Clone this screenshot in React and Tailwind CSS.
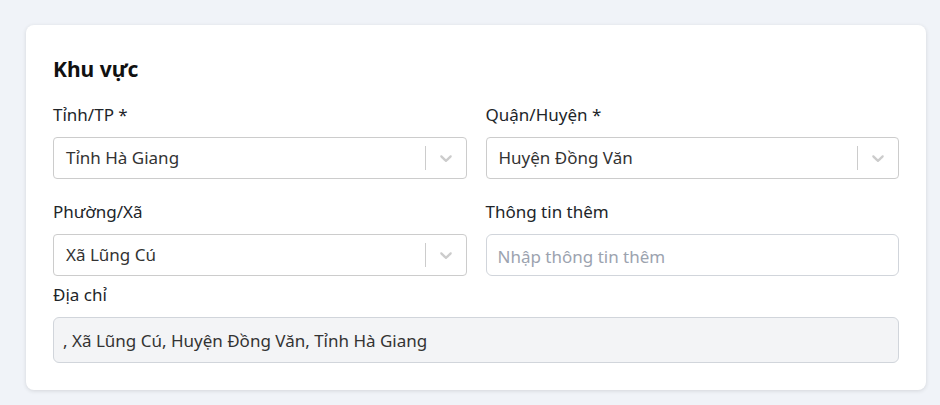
const FONT = { fontFamily: '"Noto Sans", "Open Sans", sans-serif' };

// react-select style chevron
const Chevron = () => (
  <svg width="20" height="20" viewBox="0 0 20 20" fill="#cccccc" aria-hidden="true">
    <path d="M4.516 7.548c0.436-0.446 1.043-0.481 1.576 0l3.908 3.747 3.908-3.747c0.533-0.481 1.141-0.446 1.574 0 0.436 0.445 0.408 1.197 0 1.615-0.406 0.418-4.695 4.502-4.695 4.502-0.217 0.223-0.502 0.335-0.787 0.335s-0.57-0.112-0.789-0.335c0 0-4.287-4.084-4.695-4.502s-0.436-1.17 0-1.615z" />
  </svg>
);

const Select = ({ value }) => (
  <div className="flex h-[42px] items-center rounded-[4px] border border-[#cccccc] bg-white">
    <div className="flex-1 truncate pl-[12px] text-[17px] text-[#333333]">{value}</div>
    <span className="h-[24px] w-px self-center bg-[#cccccc]" />
    <div className="flex px-[10px]">
      <Chevron />
    </div>
  </div>
);

const Field = ({ label, children }) => (
  <div className="flex flex-col">
    <label className="mb-[10px] text-[17px] leading-[24px] text-[#212529]">{label}</label>
    {children}
  </div>
);

export default function App() {
  return (
    <div className="min-h-[405px] bg-[#f0f3f8] px-[26px] pt-[25px]" style={FONT}>
      <div className="w-[900px] rounded-[8px] bg-white px-[27px] pt-[30px] pb-[27px] shadow-[0_1px_4px_rgba(0,0,0,0.12)]">
        <h2 className="mb-[20px] text-[21px] font-bold leading-[28px] text-[#111111]">Khu vực</h2>

        <div className="grid grid-cols-2 gap-x-[19px] gap-y-[21px]">
          <Field label="Tỉnh/TP *">
            <Select value="Tỉnh Hà Giang" />
          </Field>
          <Field label="Quận/Huyện *">
            <Select value="Huyện Đồng Văn" />
          </Field>
          <Field label="Phường/Xã">
            <Select value="Xã Lũng Cú" />
          </Field>
          <Field label="Thông tin thêm">
            <input
              placeholder="Nhập thông tin thêm"
              className="h-[42px] rounded-[6px] border border-[#d1d5db] px-[11px] pt-[3px] text-[17px] text-[#333333] outline-none placeholder:text-[#9ca3af]"
            />
          </Field>
        </div>

        <div className="mt-[7px] flex flex-col">
          <label className="mb-[10px] text-[17px] leading-[24px] text-[#212529]">Địa chỉ</label>
          <input
            readOnly
            value=", Xã Lũng Cú, Huyện Đồng Văn, Tỉnh Hà Giang"
            className="h-[46px] rounded-[6px] border border-[#d1d5db] bg-[#f3f4f6] px-[9px] text-[17px] text-[#333333] outline-none"
          />
        </div>
      </div>
    </div>
  );
}
